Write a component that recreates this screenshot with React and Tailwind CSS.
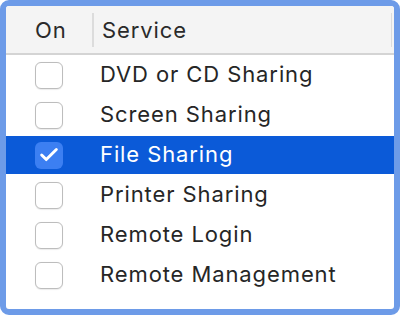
import { Check } from "lucide-react";

const services = [
  { name: "DVD or CD Sharing", on: false },
  { name: "Screen Sharing", on: false },
  { name: "File Sharing", on: true, selected: true },
  { name: "Printer Sharing", on: false },
  { name: "Remote Login", on: false },
  { name: "Remote Management", on: false },
];

function Row({ service }) {
  const sel = service.selected;
  return (
    <div className="h-[40px] flex items-center">
      <div
        className={`h-[38px] w-full flex items-center ${sel ? "bg-[#0b5ad8] text-white" : "text-[#262626]"}`}
      >
        <div className="w-[94px] pl-[29px] flex items-center">
          {sel ? (
            <div className="w-[28px] h-[27px] rounded-[6px] bg-[#3c7ff2] flex items-center justify-center">
              <Check size={22} strokeWidth={3.2} className="text-white" />
            </div>
          ) : (
            <div className="w-[28px] h-[27px] rounded-[6px] border border-[#bdbdbd] bg-white shadow-[0_0.5px_1px_rgba(0,0,0,0.08)]" />
          )}
        </div>
        <span className="text-[22px] leading-none tracking-[0.9px] -mt-[3px]">{service.name}</span>
      </div>
    </div>
  );
}

export default function App() {
  return (
    <div className="w-[401px] h-[318px] bg-white font-['Inter','Liberation_Sans',sans-serif]">
      <div className="w-[400px] h-[315px] rounded-[9px] border-[6px] border-[#6d9be8] bg-white overflow-hidden flex flex-col">
        <div className="h-[49px] shrink-0 bg-[#f4f4f4] border-b-2 border-[#d4d4d4] flex items-center text-[22px] text-[#2a2a2a] tracking-[0.9px]">
          <div className="w-[86px] pl-[29px] leading-none">On</div>
          <div className="w-[2px] h-[34px] bg-[#dcdcdc]" />
          <div className="flex-1 pl-[8px] leading-none">Service</div>
          <div className="w-px h-[34px] bg-[#dcdcdc] mr-[2px]" />
        </div>
        <div className="flex flex-col">
          {services.map((s) => (
            <Row key={s.name} service={s} />
          ))}
        </div>
      </div>
    </div>
  );
}
